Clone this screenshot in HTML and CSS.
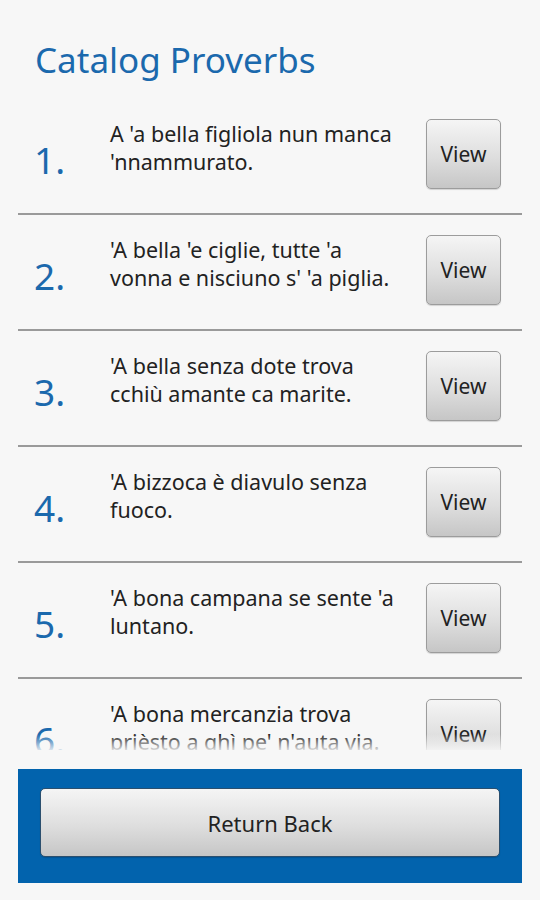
FILE: index.html
```
<!DOCTYPE html>
<html lang="it">
<head>
  <meta charset="UTF-8">
  <title>Catalog Proverbs</title>
  <meta name="viewport" content="width=device-width, initial-scale=1.0">
  <link rel="stylesheet" href="styles.css">
</head>
<body>

  <div class="page">

    <h1 class="title">Catalog Proverbs</h1>

    <!-- Proverb list -->
    <div class="list">
      <div class="row">
        <span class="num">1.</span>
        <p class="text">A 'a bella figliola nun manca 'nnammurato.</p>
        <button class="view">View</button>
      </div>
      <div class="row">
        <span class="num">2.</span>
        <p class="text">'A bella 'e ciglie, tutte 'a vonna e nisciuno s' 'a piglia.</p>
        <button class="view">View</button>
      </div>
      <div class="row">
        <span class="num">3.</span>
        <p class="text">'A bella senza dote trova cchiù amante ca marite.</p>
        <button class="view">View</button>
      </div>
      <div class="row">
        <span class="num">4.</span>
        <p class="text">'A bizzoca è diavulo senza fuoco.</p>
        <button class="view">View</button>
      </div>
      <div class="row">
        <span class="num">5.</span>
        <p class="text">'A bona campana se sente 'a luntano.</p>
        <button class="view">View</button>
      </div>
      <div class="row">
        <span class="num">6.</span>
        <p class="text">'A bona mercanzia trova prièsto a ghì pe' n'auta via.</p>
        <button class="view">View</button>
      </div>
    </div>

    <!-- Bottom bar -->
    <div class="footer">
      <button class="back">Return Back</button>
    </div>

  </div>

</body>
</html>
```

FILE: styles.css
```
body {
  margin: 0;
  font-family: 'Noto Sans', 'Open Sans', sans-serif;
  background: #f7f7f7;
  color: #222;
}

.page {
  height: 900px;
  display: flex;
  flex-direction: column;
}

.title {
  margin: 0;
  height: 99px;
  box-sizing: border-box;
  padding: 37px 0 0 35px;
  font-size: 35px;
  line-height: 46px;
  font-weight: normal;
  color: #1b69ad;
}

.list {
  position: relative;
  height: 651px;
  overflow: hidden;
  padding: 0 18px;
}

/* fading edge at the bottom of the scroll area */
.list::after {
  content: "";
  position: absolute;
  left: 0;
  right: 0;
  bottom: 0;
  height: 16px;
  background: linear-gradient(rgba(247,247,247,0), rgba(247,247,247,0.85));
}

.row {
  display: flex;
  align-items: flex-start;
  height: 116px;
  box-sizing: border-box;
  padding-top: 20px;
  border-bottom: 2px solid #9a9a9a;
}

.num {
  width: 92px;
  flex: none;
  box-sizing: border-box;
  padding-left: 16px;
  margin-top: 23px;
  font-size: 37px;
  line-height: 36px;
  color: #1b69ad;
}

.text {
  flex: 1;
  margin: 1px 16px 0 0;
  font-size: 21.5px;
  line-height: 28px;
}

.view, .back {
  font-family: inherit;
  color: #222;
  border: 1px solid #9c9c9c;
  border-radius: 5px;
  background: linear-gradient(#f5f5f5, #dedede 55%, #c6c6c6);
  box-shadow: 0 1px 1px rgba(0,0,0,0.15);
}

.view {
  flex: none;
  width: 75px;
  height: 70px;
  margin-right: 21px;
  font-size: 21px;
  padding: 0;
}

.footer {
  margin: 19px 18px 0;
  height: 114px;
  box-sizing: border-box;
  padding: 19px 22px 26px;
  background: #0263ad;
}

.back {
  width: 100%;
  height: 69px;
  font-size: 22px;
  border-color: #2b4f6e;
}
```
